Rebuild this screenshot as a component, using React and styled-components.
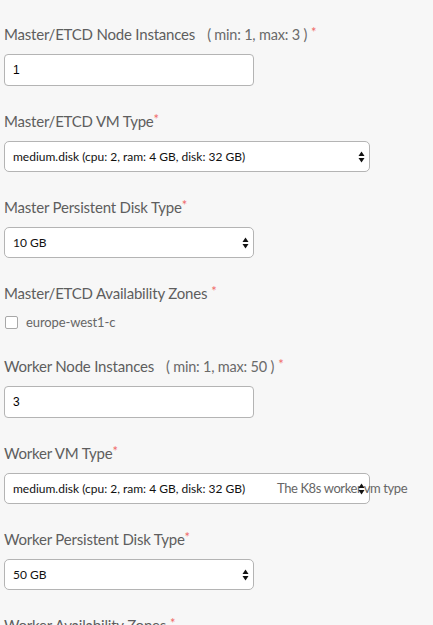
import React from "react";
import styled, { createGlobalStyle } from "styled-components";

const Global = createGlobalStyle`
  html, body { margin: 0; padding: 0; background: #f7f7f7; }
  body { font-family: "Source Sans Pro", Lato, "Open Sans", sans-serif; overflow: hidden; }
`;

const Form = styled.form`
  display: flex;
  flex-direction: column;
  padding: 24px 4px 0 4px;
`;

const Group = styled.div`
  display: flex;
  flex-direction: column;
  align-items: flex-start;
  gap: 10px;
  margin-bottom: 25px;
`;

const Label = styled.label`
  display: flex;
  align-items: baseline;
  height: 20px;
  font-size: 15px;
  line-height: 20px;
  letter-spacing: -0.2px;
  color: #5e5e5e;
  white-space: nowrap;
`;

const Hint = styled.span`
  margin-left: 12px;
  font-size: 14.5px;
  color: #6a6a6a;
`;

const Star = styled.span`
  color: #f06a6a;
  font-size: 13px;
  margin-left: ${(p) => (p.$gap ? "4px" : "0")};
  position: relative;
  top: -3px;
`;

const TextInput = styled.input`
  box-sizing: border-box;
  width: 250px;
  height: 32px;
  padding: 0 8px;
  border: 1px solid #b4b4b4;
  border-radius: 4px;
  background: #fff;
  font-family: "Liberation Sans", Arial, sans-serif;
  font-size: 12px;
  color: #000;
  outline: none;
`;

const SelectWrap = styled.div`
  position: relative;
  width: ${(p) => p.$w}px;
`;

const Select = styled.select`
  box-sizing: border-box;
  appearance: none;
  -webkit-appearance: none;
  width: 100%;
  height: 31px;
  padding: 0 20px 0 8px;
  border: 1px solid #b4b4b4;
  border-radius: 5px;
  background: #fff;
  font-family: Lato, "Open Sans", sans-serif;
  font-size: 12px;
  color: #111;
  outline: none;
`;

const Arrows = styled.svg`
  position: absolute;
  right: 5px;
  top: 10px;
  width: 7px;
  height: 12px;
  pointer-events: none;
  z-index: 2;
`;

const Tooltip = styled.span`
  position: absolute;
  left: 273px;
  top: 6px;
  font-size: 13px;
  line-height: 18px;
  letter-spacing: -0.4px;
  color: #666;
  white-space: nowrap;
  z-index: 1;
`;

const CheckRow = styled.label`
  display: flex;
  align-items: center;
  gap: 8px;
  margin-left: 1px;
  font-size: 13px;
  line-height: 18px;
  letter-spacing: -0.1px;
  color: #666;
`;

const Box = styled.span`
  box-sizing: border-box;
  width: 13px;
  height: 13px;
  border: 1px solid #a8a8a8;
  border-radius: 2px;
  background: #fff;
`;

function ArrowIcon() {
  return (
    <Arrows viewBox="0 0 7 12">
      <path d="M3.5 0.5 L6.5 5 L0.5 5 Z" fill="#111" />
      <path d="M0.5 7 L6.5 7 L3.5 11.5 Z" fill="#111" />
    </Arrows>
  );
}

function SelectField({ label, value, width, tooltip }) {
  return (
    <Group>
      <Label>
        {label}
        <Star>*</Star>
      </Label>
      <SelectWrap $w={width}>
        <Select defaultValue={value}>
          <option>{value}</option>
        </Select>
        {tooltip && <Tooltip>{tooltip}</Tooltip>}
        <ArrowIcon />
      </SelectWrap>
    </Group>
  );
}

function NumberField({ label, hint, value }) {
  return (
    <Group>
      <Label>
        {label}
        <Hint>( {hint} )</Hint>
        <Star $gap>*</Star>
      </Label>
      <TextInput defaultValue={value} />
    </Group>
  );
}

function ZoneField({ label, zones }) {
  return (
    <Group>
      <Label>
        {label}
        <Star $gap>*</Star>
      </Label>
      {zones.map((z) => (
        <CheckRow key={z}>
          <Box />
          {z}
        </CheckRow>
      ))}
    </Group>
  );
}

export default function App() {
  const vm = "medium.disk (cpu: 2, ram: 4 GB, disk: 32 GB)";
  return (
    <>
      <Global />
      <Form>
        <NumberField label="Master/ETCD Node Instances" hint="min: 1, max: 3" value="1" />
        <SelectField label="Master/ETCD VM Type" value={vm} width={366} />
        <SelectField label="Master Persistent Disk Type" value="10 GB" width={250} />
        <ZoneField label="Master/ETCD Availability Zones" zones={["europe-west1-c"]} />
        <NumberField label="Worker Node Instances" hint="min: 1, max: 50" value="3" />
        <SelectField label="Worker VM Type" value={vm} width={366} tooltip="The K8s worker vm type" />
        <SelectField label="Worker Persistent Disk Type" value="50 GB" width={250} />
        <ZoneField label="Worker Availability Zones" zones={["europe-west1-c"]} />
      </Form>
    </>
  );
}
